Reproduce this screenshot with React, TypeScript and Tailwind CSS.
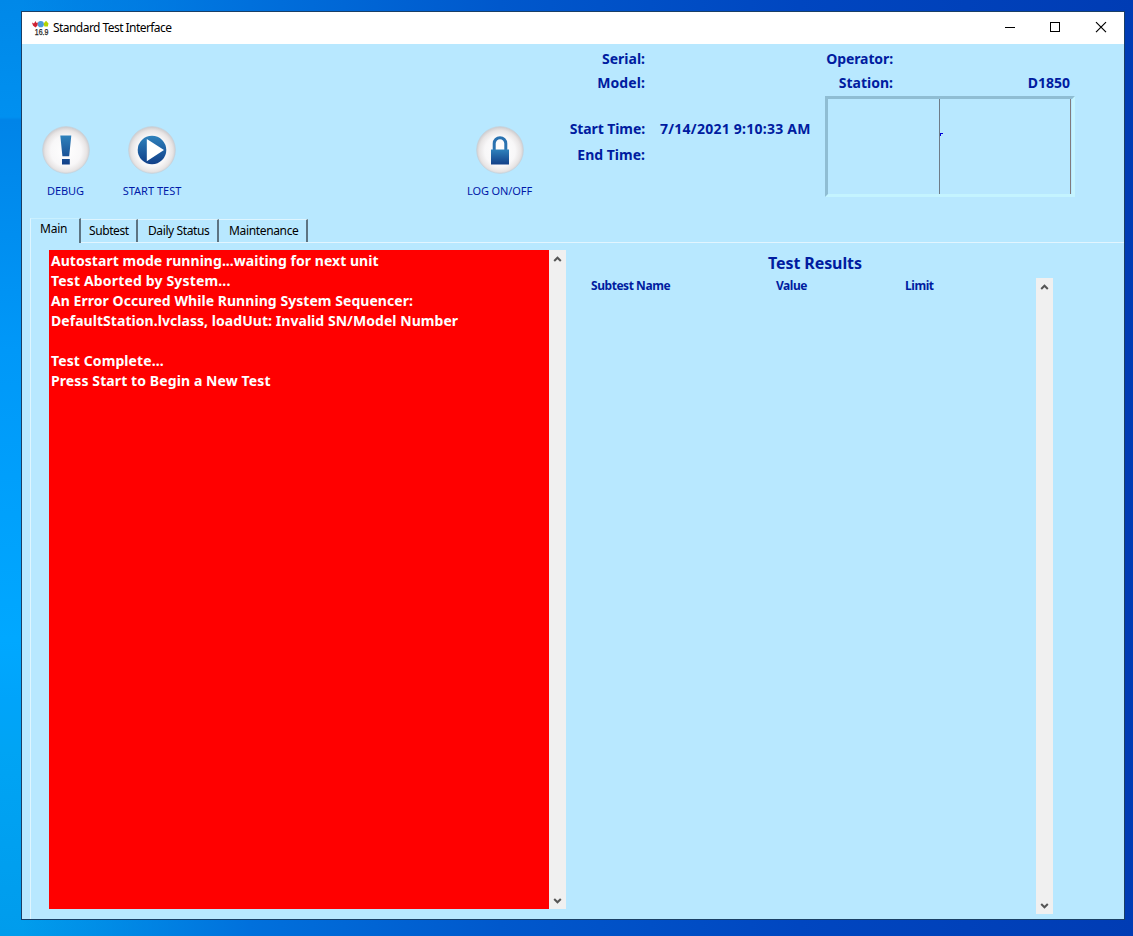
import React from 'react';

function Orb({ children }: { children: React.ReactNode }) {
  return (
    <svg width="48" height="48" viewBox="0 0 48 48" className="block shrink-0">
      <defs>
        <radialGradient id="orb" cx="50%" cy="52%" r="50%">
          <stop offset="0" stopColor="#ffffff" />
          <stop offset="0.65" stopColor="#f8f7f8" />
          <stop offset="0.88" stopColor="#e8e5e5" />
          <stop offset="1" stopColor="#d2d0d2" />
        </radialGradient>
        <linearGradient id="blue" x1="0" y1="0" x2="0" y2="1">
          <stop offset="0" stopColor="#2f82bc" />
          <stop offset="1" stopColor="#113f88" />
        </linearGradient>
      </defs>
      <circle cx="24" cy="24" r="23.4" fill="url(#orb)" stroke="#c3cfd8" strokeWidth="0.6" />
      {children}
    </svg>
  );
}

function ToolButton({ label, className, labelClass, children }: { label: string; className: string; labelClass: string; children: React.ReactNode }) {
  return (
    <button className={`flex flex-col items-center ${className}`}>
      <Orb>{children}</Orb>
      <span className={`mt-[9px] whitespace-nowrap text-[11px] leading-4 text-[#0019a8] ${labelClass}`}>{label}</span>
    </button>
  );
}

function Chevron({ down = false }: { down?: boolean }) {
  return (
    <svg width="17" height="17" viewBox="0 0 17 17" className="block">
      <path d={down ? 'M5.2 7 8.5 10.3 11.8 7' : 'M5.2 11 8.5 7.7 11.8 11'} fill="none" stroke="#555" strokeWidth="2" />
    </svg>
  );
}

function ScrollBar({ className }: { className: string }) {
  return (
    <div className={`flex w-[17px] shrink-0 flex-col justify-between bg-[#f0f0f0] ${className}`}>
      <Chevron />
      <Chevron down />
    </div>
  );
}

function AppIcon() {
  return (
    <svg width="18" height="16" viewBox="0 0 18 16" className="block shrink-0">
      <path d="M0 2.5 2 3.5 3.5 1 4.5 3 6 2.5 5.5 5.5 3.5 7.5 1 5.5Z" fill="#cf2233" />
      <circle cx="8.8" cy="4.2" r="3.1" fill="#4a9bd8" />
      <path d="M14 0.8 16.5 3.5 15.8 6.5 12.4 6.5 11.6 3.5Z" fill="#b5d400" />
      <text x="2.8" y="14.6" fontSize="8.5" fontFamily="Liberation Sans, sans-serif" fill="#222" stroke="#222" strokeWidth="0.25" textLength="13.6" lengthAdjust="spacingAndGlyphs">16.9</text>
    </svg>
  );
}

const messages = [
  { text: 'Autostart mode running...waiting for next unit', track: 'tracking-[0.04px]' },
  { text: 'Test Aborted by System...', track: 'tracking-[0.16px]' },
  { text: 'An Error Occured While Running System Sequencer:', track: 'tracking-[0.05px]' },
  { text: 'DefaultStation.lvclass, loadUut: Invalid SN/Model Number', track: 'tracking-[0.05px]' },
  { text: '', track: '' },
  { text: 'Test Complete...', track: 'tracking-[0.1px]' },
  { text: 'Press Start to Begin a New Test', track: 'tracking-[0.1px]' },
];

const tabs = [
  { text: 'Subtest', className: 'w-[57px] pl-[8px] tracking-[-0.4px]' },
  { text: 'Daily Status', className: 'w-[81px] pl-[10px] tracking-[-0.4px]' },
  { text: 'Maintenance', className: 'w-[89px] pl-[10px] tracking-[-0.35px]' },
];

export default function App() {
  return (
    <div className="h-[936px] w-[1133px] overflow-hidden bg-[linear-gradient(90deg,transparent_22px,#0070dc_250px,#0058cc_500px,#0046c0_800px,#003cb4_1133px),linear-gradient(180deg,#0088e8,#0090f0_117px,#0084e8_120px,#0098f8_350px,#00a8ff_640px,#00a4fa_700px,#00a4f4_750px,#009cec_936px)] pl-[21px] pt-[11px] font-['Noto_Sans',sans-serif]">
      <div className="flex h-[909px] w-[1104px] flex-col border border-[#1a3f66] bg-[#b8e8ff]">
        <header className="flex h-8 shrink-0 items-center bg-white pl-[10px]">
          <AppIcon />
          <span className="ml-[3px] grow whitespace-nowrap text-[12px] tracking-[-0.55px] text-black">Standard Test Interface</span>
          <svg width="120" height="32" viewBox="0 0 120 32" className="block" fill="none" stroke="#000">
            <path d="M1 15.5H11M46.5 10.5H55.5V19.5H46.5Z" shapeRendering="crispEdges" />
            <path d="M92 10.2 102 20.2M102 10.2 92 20.2" strokeWidth="1.2" />
          </svg>
        </header>

        <section className="flex h-[174px] shrink-0 text-[#001ca0]">
          <ToolButton label="DEBUG" className="ml-[14px] w-[60px] pt-[82px]" labelClass="-translate-x-[0.5px] tracking-[-0.05px]">
            <path d="M18.3 9.5H29.3L27.2 30.3H20.4ZM20 33H27.8V38.6H20Z" fill="url(#blue)" />
          </ToolButton>
          <ToolButton label="START TEST" className="ml-[16px] w-[80px] pt-[82px]" labelClass="">
            <circle cx="24" cy="24" r="14.3" fill="url(#blue)" />
            <path d="M18.8 13 36 24 18.8 35.3Z" fill="#fff" />
          </ToolButton>
          <ToolButton label="LOG ON/OFF" className="ml-[268px] w-[80px] pt-[82px]" labelClass="-translate-x-[0.5px] tracking-[-0.1px]">
            <path d="M18.2 25V17.5a5.8 5.8 0 0 1 11.6 0V25" fill="none" stroke="#2a72b0" strokeWidth="3" />
            <path d="M15 23.5H33V38.5H15Z" fill="url(#blue)" />
          </ToolButton>

          <div className="ml-[20px] w-[85px] text-right text-[14px] font-bold leading-6">
            <div className="mt-[3px] whitespace-nowrap">Serial:</div>
            <div className="whitespace-nowrap tracking-[0.1px]">Model:</div>
            <div className="mt-[22px] whitespace-nowrap tracking-[-0.1px]">Start Time:</div>
            <div className="mt-[2px] whitespace-nowrap">End Time:</div>
          </div>
          <div className="ml-[15px] w-[165px] whitespace-nowrap pt-[73px] text-[14px] font-bold leading-6 tracking-[0.25px]">7/14/2021 9:10:33 AM</div>

          <div className="w-[251px]">
            <div className="mt-[3px] flex h-6 text-[14px] font-bold leading-6">
              <span className="w-[68px] text-right tracking-[-0.1px]">Operator:</span>
            </div>
            <div className="flex h-6 justify-between pr-[6px] text-[14px] font-bold leading-6">
              <span className="w-[68px] text-right">Station:</span>
              <span>D1850</span>
            </div>
            <div className="mt-px h-[101px] w-[250px] border-[3px] border-b-[#c4f4ff] border-l-[#8fbdd3] border-r-[#c4f4ff] border-t-[#8fbdd3]">
              <svg width="244" height="95" viewBox="0 0 244 95" className="block" fill="none" shapeRendering="crispEdges">
                <path d="M111.5 0V95" stroke="#6e7c88" />
                <path d="M242.5 0V95" stroke="#807a7c" />
                <path d="M112.5 36.5V34.5H115" stroke="#0000d8" />
              </svg>
            </div>
          </div>
        </section>

        <nav className="ml-[8px] flex h-[25px] shrink-0 text-[12px] text-black">
          <div className="w-[51px] border-l border-r-2 border-t border-l-[#dff5ff] border-r-[#5c7482] border-t-[#c9f0ff] pl-[9px] leading-[20px] tracking-[-0.2px]">Main</div>
          <div className="flex grow border-b border-[#e2f5ff] pt-px">
            {tabs.map((t) => (
              <div key={t.text} className={`h-[23px] whitespace-nowrap border-r-2 border-t border-r-[#5c7482] border-t-[#dff5ff] leading-[22px] ${t.className}`}>
                {t.text}
              </div>
            ))}
          </div>
        </nav>

        <main className="ml-[8px] flex grow border-l border-[#dff5ff]">
          <div className="ml-[18px] mt-[7px] h-[659px] w-[500px] shrink-0 bg-[#ff0000] pl-[2px] pt-px text-[14px] font-bold text-white">
            {messages.map((m, i) => (
              <div key={i} className={`h-5 whitespace-nowrap leading-5 ${m.track}`}>{m.text}</div>
            ))}
          </div>
          <ScrollBar className="mt-[7px] h-[659px]" />
          <div className="w-[470px] pl-[25px] text-[#001ca0]">
            <h2 className="mt-[8px] pl-[177px] text-[16px] font-bold leading-6 tracking-[-0.1px]">Test Results</h2>
            <div className="flex text-[12px] font-bold leading-[22px] tracking-[-0.45px]">
              <span className="w-[185px]">Subtest Name</span>
              <span className="w-[129px]">Value</span>
              <span>Limit</span>
            </div>
          </div>
          <ScrollBar className="mt-[35px] h-[636px]" />
        </main>
      </div>
    </div>
  );
}
